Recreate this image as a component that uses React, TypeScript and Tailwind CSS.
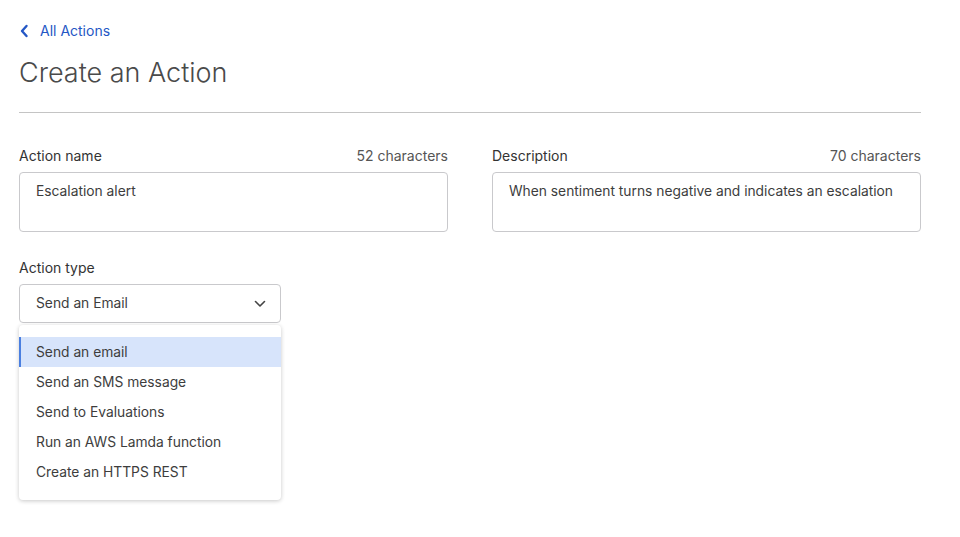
import React from "react"

const options = [
    "Send an email",
    "Send an SMS message",
    "Send to Evaluations",
    "Run an AWS Lamda function",
    "Create an HTTPS REST",
]

function Field(props: { label: string; count: string; value: string }) {
    return (
        <div className="flex flex-col">
            <div className="flex justify-between text-[14px] leading-[20px]">
                <span className="text-[#333]">{props.label}</span>
                <span className="text-[#555]">{props.count}</span>
            </div>
            <div className="mt-[6px] h-[60px] rounded-[4px] border border-[#c9c9cc] px-[16px] pt-[8px] text-[13.8px] leading-[20px] text-[#3d3d3d]">
                {props.value}
            </div>
        </div>
    )
}

export default function App() {
    return (
        <div className="min-h-[537px] bg-white font-['Inter',sans-serif]">
            <div className="w-[902px] ml-[19px] pt-[21px]">
                <a className="flex items-center gap-[11px] text-[14px] leading-[20px] text-[#2457c5]">
                    <svg width="10" height="14" viewBox="0 0 10 14" fill="none">
                        <path d="M7.5 2 L3 7 L7.5 12" stroke="#2457c5" strokeWidth="2.4" strokeLinecap="round" strokeLinejoin="round" />
                    </svg>
                    All Actions
                </a>
                <h1 className="mt-[14px] text-[27px] leading-[36px] font-light text-[#4a4a4a]">Create an Action</h1>
                <div className="mt-[21px] border-t border-[#c4c4c4]"></div>

                <div className="mt-[33px] grid grid-cols-2 gap-[44px]">
                    <Field label="Action name" count="52 characters" value="Escalation alert" />
                    <Field label="Description" count="70 characters" value="When sentiment turns negative and indicates an escalation" />
                </div>

                <div className="mt-[26px] w-[262px]">
                    <div className="text-[14px] leading-[20px] text-[#333]">Action type</div>
                    <div className="mt-[6px] flex h-[39px] items-center justify-between rounded-[4px] border border-[#c9c9cc] pl-[16px] pr-[14px] text-[13.8px] text-[#3d3d3d]">
                        <span>Send an Email</span>
                        <svg width="12" height="8" viewBox="0 0 12 8" fill="none">
                            <path d="M1.5 1.5 L6 6 L10.5 1.5" stroke="#444" strokeWidth="1.6" strokeLinecap="round" strokeLinejoin="round" />
                        </svg>
                    </div>
                    <ul className="mt-[2px] rounded-[4px] bg-white pt-[12px] pb-[13px] shadow-[0_1px_4px_rgba(0,0,0,0.22)]">
                        {options.map((o, i) => (
                            <li
                                key={o}
                                className={
                                    i === 0
                                        ? "h-[30px] flex items-center border-l-2 border-[#4a7fe0] bg-[#d7e4fb] pl-[15px] text-[13.8px] text-[#3d3d3d]"
                                        : "h-[30px] flex items-center pl-[17px] text-[13.8px] text-[#3d3d3d]"
                                }
                            >
                                {o}
                            </li>
                        ))}
                    </ul>
                </div>
            </div>
        </div>
    )
}
